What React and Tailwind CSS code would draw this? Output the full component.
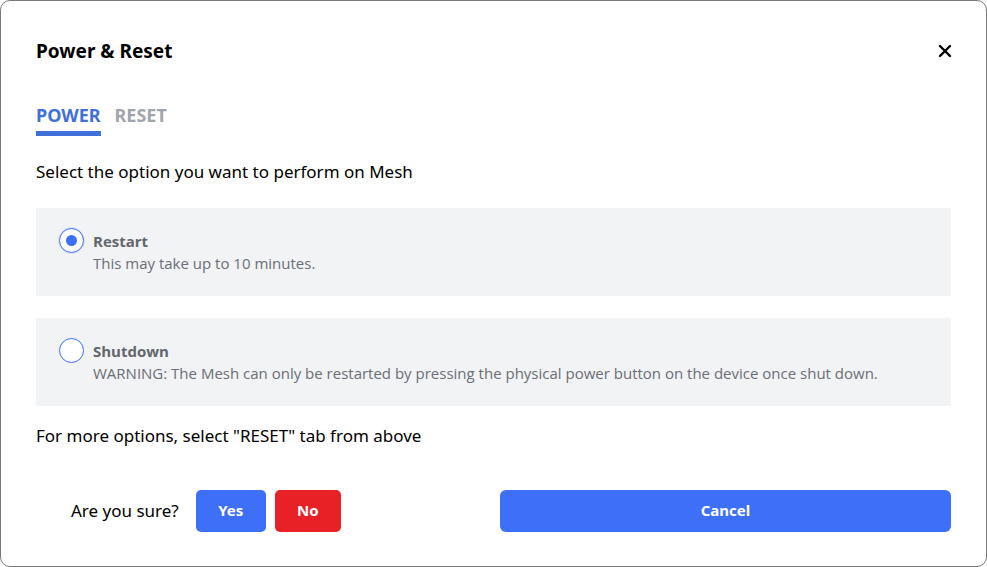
import { useState } from "react";

const options = [
  { id: "restart", title: "Restart", desc: "This may take up to 10 minutes." },
  {
    id: "shutdown",
    title: "Shutdown",
    desc: "WARNING: The Mesh can only be restarted by pressing the physical power button on the device once shut down.",
  },
];

function Radio({ checked }) {
  return (
    <span
      className={`mt-[-2px] flex h-[25px] w-[25px] shrink-0 items-center justify-center rounded-full border bg-white ${
        checked ? "border-[#3d6ff8] shadow-[0_0_0_1px_#dbe4fb]" : "border-[#3d6ff8]"
      }`}
    >
      {checked && <span className="h-[11px] w-[11px] rounded-full bg-[#3d6ff8]" />}
    </span>
  );
}

export default function App() {
  const [tab, setTab] = useState("power");
  const [choice, setChoice] = useState("restart");

  return (
    <div className="h-[567px] w-[987px] bg-white font-['Noto_Sans',sans-serif]">
      <div className="flex h-full flex-col rounded-[10px] border border-[#7a7a7a] px-[35px] pt-[36px]">
        {/* Header */}
        <div className="flex items-center justify-between">
          <h1 className="text-[19px] font-bold text-black">Power &amp; Reset</h1>
          <button className="mr-[-1px] text-black">
            <svg width="14" height="14" viewBox="0 0 14 14">
              <path d="M2 2 L12 12 M12 2 L2 12" stroke="currentColor" strokeWidth="2.4" strokeLinecap="round" />
            </svg>
          </button>
        </div>

        {/* Tabs */}
        <div className="mt-[38px] flex gap-[14px]">
          <button
            onClick={() => setTab("power")}
            className={`border-b-[5px] pb-[5px] text-[18px] font-bold leading-[22px] ${
              tab === "power" ? "border-[#3f6fd8] text-[#3f6fd8]" : "border-transparent text-[#a0a4ab]"
            }`}
          >
            POWER
          </button>
          <button
            onClick={() => setTab("reset")}
            className={`border-b-[5px] pb-[5px] text-[18px] font-bold leading-[22px] ${
              tab === "reset" ? "border-[#3f6fd8] text-[#3f6fd8]" : "border-transparent text-[#a0a4ab]"
            }`}
          >
            RESET
          </button>
        </div>

        <p className="mt-[25px] text-[17px] leading-[22px] text-black">
          Select the option you want to perform on Mesh
        </p>

        {/* Options */}
        <div className="mt-[25px] flex flex-col gap-[22px]">
          {options.map((o) => (
            <label
              key={o.id}
              onClick={() => setChoice(o.id)}
              className="flex h-[88px] cursor-pointer items-center bg-[#f2f3f5] pl-[23px] font-['Open_Sans',sans-serif]"
            >
              <div className="flex items-start gap-[9px]">
                <Radio checked={choice === o.id} />
                <div>
                  <div className="text-[15px] font-bold leading-[22px] text-[#62666d]">{o.title}</div>
                  <div className="text-[15px] leading-[22px] text-[#6b6e75]">{o.desc}</div>
                </div>
              </div>
            </label>
          ))}
        </div>

        <p className="mt-[19px] text-[17px] leading-[22px] text-black">
          For more options, select "RESET" tab from above
        </p>

        {/* Footer */}
        <div className="mt-[43px] flex items-center">
          <span className="ml-[35px] text-[17px] text-black">Are you sure?</span>
          <button className="ml-[17px] h-[42px] w-[70px] rounded-[5px] bg-[#3d6ff8] text-[15px] font-bold text-white">
            Yes
          </button>
          <button className="ml-[9px] h-[42px] w-[66px] rounded-[5px] bg-[#e82127] text-[15px] font-bold text-white">
            No
          </button>
          <button className="ml-auto h-[42px] w-[451px] rounded-[6px] bg-[#3d6ff8] text-[15px] font-bold text-white">
            Cancel
          </button>
        </div>
      </div>
    </div>
  );
}
